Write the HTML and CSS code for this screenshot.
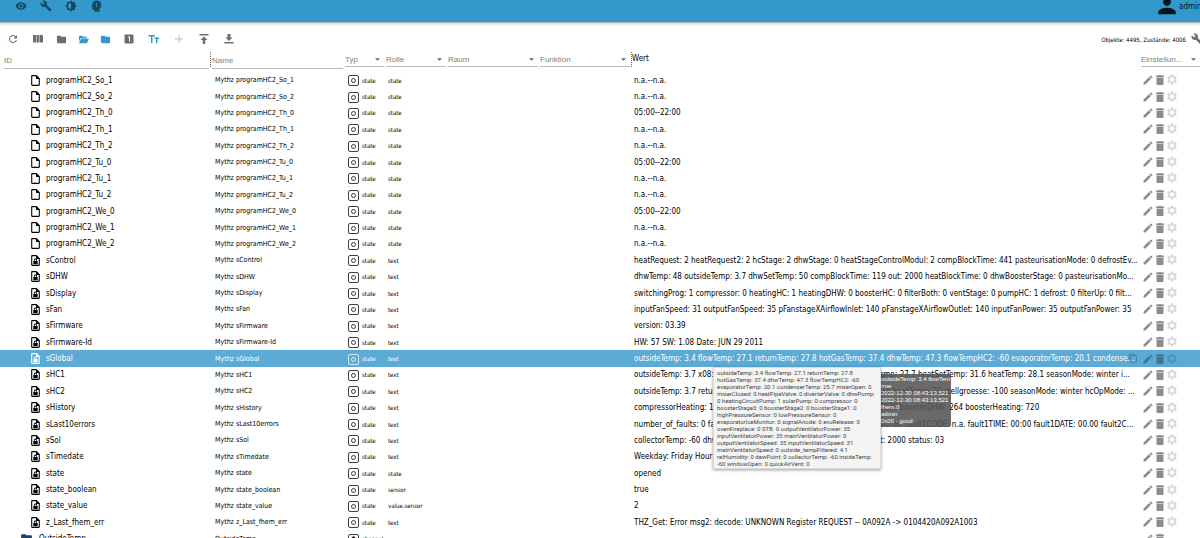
FILE: index.html
```
<!DOCTYPE html>
<html lang="de">
<head>
    <meta charset="UTF-8">
    <meta name="viewport" content="width=device-width, initial-scale=1.0">
    <title>Objekte</title>
    <link rel="stylesheet" href="styles.css">
</head>
<body>
    <svg class="sprite" aria-hidden="true">
        <symbol id="i-eye" viewBox="0 0 24 24"><path d="M12 4.500C7 4.500 2.730 7.610 1 12c1.730 4.390 6 7.500 11 7.500s9.270-3.110 11-7.500c-1.730-4.390-6-7.500-11-7.500zM12 17c-2.760 0-5-2.240-5-5s2.240-5 5-5 5 2.240 5 5-2.240 5-5 5zm0-8c-1.660 0-3 1.340-3 3s1.340 3 3 3 3-1.340 3-3-1.340-3-3-3z"/></symbol>
        <symbol id="i-wrench" viewBox="0 0 24 24"><path d="M22.700 19l-9.100-9.100c.9-2.300.4-5-1.500-6.900-2-2-5-2.400-7.400-1.300L9 6 6 9 1.600 4.700C.4 7.100.9 10.100 2.900 12.100c1.900 1.900 4.600 2.400 6.900 1.500l9.100 9.100c.4.4 1 .4 1.400 0l2.300-2.300c.5-.4.5-1.100.1-1.400z"/></symbol>
        <symbol id="i-theme" viewBox="0 0 24 24"><path d="M20 8.690V4h-4.690L12 .69 8.690 4H4v4.690L.69 12 4 15.310V20h4.690L12 23.310 15.310 20H20v-4.690L23.310 12 20 8.690zM12 18c-3.310 0-6-2.690-6-6s2.690-6 6-6v12z"/></symbol>
        <symbol id="i-head" viewBox="0 0 24 24"><path fill-rule="evenodd" d="M13 1C8.500 1 5 4 4.900 8.500L2.600 12.600c-.2.4 0 .9.500.9H5V18c0 1.100.9 2 2 2h2v3.500h10v-6c2-1.500 3.500-4 3.500-7C22.500 5 18.500 1 13 1zm1 13h-2v-2h2zm0-3.500h-2V6h2z"/></symbol>
        <symbol id="i-user" viewBox="0 0 24 24"><path d="M12 12c2.600 0 4.700-2.100 4.700-4.700S14.600 2.600 12 2.600 7.300 4.700 7.300 7.300 9.400 12 12 12zm0 2c-3.500 0-10.500 1.800-10.500 5.200V22h21v-2.800C22.500 15.800 15.500 14 12 14z"/></symbol>
        <symbol id="i-refresh" viewBox="0 0 24 24"><path d="M17.650 6.350C16.200 4.900 14.210 4 12 4c-4.420 0-7.990 3.580-7.990 8s3.570 8 7.990 8c3.730 0 6.840-2.550 7.730-6h-2.080c-.82 2.330-3.040 4-5.650 4-3.310 0-6-2.690-6-6s2.690-6 6-6c1.660 0 3.140.69 4.220 1.780L13 11h7V4l-2.350 2.350z"/></symbol>
        <symbol id="i-columns" viewBox="0 0 24 24"><path d="M9 19h6V4H9v15zm-7 0h6V4H2v15zM16 4v15h6V4h-6z"/></symbol>
        <symbol id="i-folder" viewBox="0 0 24 24"><path d="M10 4H4c-1.100 0-2 .9-2 2v12c0 1.100.9 2 2 2h16c1.100 0 2-.9 2-2V8c0-1.100-.9-2-2-2h-8l-2-2z"/></symbol>
        <symbol id="i-folder-open" viewBox="0 0 24 24"><path d="M2 17V6c0-1.100.8-2 2-2h5l2 2h6.500c1 0 1.800.8 1.800 1.800V9H7c-1 0-1.800.6-2.200 1.500L2 17zm.6 2l3.500-7.600c.2-.6.8-.9 1.400-.9h14.800c.9 0 1.400.9 1 1.700l-3 6.600c-.3.700-1 1.200-1.800 1.200H3.500c-.7 0-1.100-.4-.9-1z"/></symbol>
        <symbol id="i-one" viewBox="0 0 24 24"><path d="M19 3H5c-1.100 0-2 .9-2 2v14c0 1.100.9 2 2 2h14c1.100 0 2-.9 2-2V5c0-1.100-.9-2-2-2zm-5 14h-2V9h-2V7h4v10z"/></symbol>
        <symbol id="i-text" viewBox="0 0 24 24"><path d="M1 4v3h5v13h3V7h5V4H1zm21 5h-9v3h3v8h3v-8h3V9z"/></symbol>
        <symbol id="i-plus" viewBox="0 0 24 24"><path d="M20 13h-7v7h-2v-7H4v-2h7V4h2v7h7v2z"/></symbol>
        <symbol id="i-upload" viewBox="0 0 24 24"><path d="M3 2v3h18V2H3zm2 12h4.500v8h5v-8H19l-7-7-7 7z"/></symbol>
        <symbol id="i-download" viewBox="0 0 24 24"><path d="M19 9h-4V2H9v7H5l7 7 7-7zM3 18v3h18v-3H3z"/></symbol>
        <symbol id="i-file" viewBox="0 0 24 24"><path d="M14 2H6c-1.100 0-2 .9-2 2v16c0 1.100.9 2 2 2h12c1.100 0 2-.9 2-2V8l-6-6zM6 20V4h7v5h5v11H6z"/></symbol>
        <symbol id="i-filelock" viewBox="0 0 24 24"><path d="M14 2H6c-1.100 0-2 .9-2 2v16c0 1.100.9 2 2 2h12c1.100 0 2-.9 2-2V8l-6-6zM6 20V4h7v5h5v11H6z"/><path fill-rule="evenodd" d="M8 13h1v-1.500c0-1.700 1.300-3 3-3s3 1.300 3 3V13h1v6H8zm2.500 0h3v-1.500c0-.8-.7-1.500-1.500-1.500s-1.500.7-1.500 1.500z"/></symbol>
        <symbol id="i-edit" viewBox="0 0 24 24"><path d="M3 17.250V21h3.750L17.810 9.940l-3.750-3.750L3 17.250zM20.710 7.040c.39-.39.39-1.020 0-1.410l-2.340-2.340c-.39-.39-1.020-.39-1.410 0l-1.830 1.830 3.750 3.750 1.830-1.830z"/></symbol>
        <symbol id="i-trash" viewBox="0 0 24 24"><path d="M5 20c0 1.100.9 2 2 2h10c1.100 0 2-.9 2-2V7H5v13zM20 3h-4.500l-1-1h-5l-1 1H4v3h16V3z"/></symbol>
        <symbol id="i-gear" viewBox="0 0 24 24"><path fill-rule="evenodd" d="M10 1h4l.6 3.200 2 1.200 3.100-1.200 2 3.500-2.500 2.100v2.400l2.500 2.100-2 3.500-3.100-1.200-2 1.200L14 21h-4l-.6-3.200-2-1.200-3.100 1.200-2-3.500 2.500-2.100V9.800L2.300 7.700l2-3.500 3.100 1.200 2-1.200L10 1zm2 5.500a4.500 4.500 0 100 9 4.500 4.500 0 000-9z"/></symbol>
        <symbol id="i-copy" viewBox="0 0 24 24"><path d="M16 1H4c-1.100 0-2 .9-2 2v14h2V3h12V1zm3 4H8c-1.100 0-2 .9-2 2v14c0 1.100.9 2 2 2h11c1.100 0 2-.9 2-2V7c0-1.100-.9-2-2-2zm0 16H8V7h11v14z"/></symbol>
        <symbol id="i-state" viewBox="0 0 22 22"><rect class="box" x="1" y="1" width="20" height="20" rx="3"/><circle class="dot" cx="11" cy="11" r="4"/></symbol>
        <symbol id="i-channel" viewBox="0 0 22 22"><rect class="box" x="1" y="1" width="20" height="20" rx="3"/><path d="M11 4l4 4h-3v9h-2V8H7z"/></symbol>
    </svg>

    <header class="appbar">
        <button aria-label="Ansicht"><svg><use href="#i-eye"/></svg></button>
        <button aria-label="Einstellungen"><svg><use href="#i-wrench"/></svg></button>
        <button aria-label="Thema"><svg><use href="#i-theme"/></svg></button>
        <button aria-label="Expertenmodus"><svg><use href="#i-head"/></svg></button>
        <div class="user"><svg><use href="#i-user"/></svg><span>admin</span></div>
    </header>

    <div class="toolbar">
        <button aria-label="Aktualisieren"><svg><use href="#i-refresh"/></svg></button>
        <button aria-label="Spalten"><svg><use href="#i-columns"/></svg></button>
        <button class="narrow" aria-label="Alle schließen"><svg><use href="#i-folder"/></svg></button>
        <button class="narrow active" aria-label="Alle öffnen"><svg><use href="#i-folder-open"/></svg></button>
        <button class="narrow active" aria-label="Eine Ebene schließen"><svg><use href="#i-folder"/></svg></button>
        <button aria-label="Eine Ebene öffnen"><svg><use href="#i-one"/></svg></button>
        <button class="active" aria-label="Namen anzeigen"><svg><use href="#i-text"/></svg></button>
        <button class="disabled" aria-label="Hinzufügen"><svg><use href="#i-plus"/></svg></button>
        <button aria-label="Hochladen"><svg><use href="#i-upload"/></svg></button>
        <button aria-label="Herunterladen"><svg><use href="#i-download"/></svg></button>
        <span class="counter">Objekte: 4495, Zustände: 4006</span>
        <button class="config" aria-label="Konfiguration"><svg><use href="#i-wrench"/></svg></button>
    </div>

    <main class="objects">
        <table>
            <colgroup>
                <col class="col-id">
                <col class="col-name">
                <col class="col-type">
                <col class="col-role">
                <col class="col-room">
                <col class="col-func">
                <col>
                <col class="col-actions">
            </colgroup>
            <thead>
                <tr>
                    <th class="first"><input type="text" placeholder="ID" aria-label="ID"></th>
                    <th><div class="handle"><input type="text" placeholder="Name" aria-label="Name"></div></th>
                    <th><select aria-label="Typ"><option>Typ</option></select></th>
                    <th><select aria-label="Rolle"><option>Rolle</option></select></th>
                    <th><select aria-label="Raum"><option>Raum</option></select></th>
                    <th><select aria-label="Funktion"><option>Funktion</option></select></th>
                    <th><div class="handle wert">Wert</div></th>
                    <th class="last"><select aria-label="Einstellungen"><option>Einstellun...</option></select></th>
                </tr>
            </thead>
            <tbody id="rows"></tbody>
        </table>
    </main>

    <script>
        const rows = [
            ['programHC2_So_1', 'state', 'n.a.--n.a.'],
            ['programHC2_So_2', 'state', 'n.a.--n.a.'],
            ['programHC2_Th_0', 'state', '05:00--22:00'],
            ['programHC2_Th_1', 'state', 'n.a.--n.a.'],
            ['programHC2_Th_2', 'state', 'n.a.--n.a.'],
            ['programHC2_Tu_0', 'state', '05:00--22:00'],
            ['programHC2_Tu_1', 'state', 'n.a.--n.a.'],
            ['programHC2_Tu_2', 'state', 'n.a.--n.a.'],
            ['programHC2_We_0', 'state', '05:00--22:00'],
            ['programHC2_We_1', 'state', 'n.a.--n.a.'],
            ['programHC2_We_2', 'state', 'n.a.--n.a.'],
            ['sControl', 'text', 'heatRequest: 2 heatRequest2: 2 hcStage: 2 dhwStage: 0 heatStageControlModul: 2 compBlockTime: 441 pasteurisationMode: 0 defrostEv...'],
            ['sDHW', 'text', 'dhwTemp: 48 outsideTemp: 3.7 dhwSetTemp: 50 compBlockTime: 119 out: 2000 heatBlockTime: 0 dhwBoosterStage: 0 pasteurisationMo...'],
            ['sDisplay', 'text', 'switchingProg: 1 compressor: 0 heatingHC: 1 heatingDHW: 0 boosterHC: 0 filterBoth: 0 ventStage: 0 pumpHC: 1 defrost: 0 filterUp: 0 filt...'],
            ['sFan', 'text', 'inputFanSpeed: 31 outputFanSpeed: 35 pFanstageXAirflowInlet: 140 pFanstageXAirflowOutlet: 140 inputFanPower: 35 outputFanPower: 35'],
            ['sFirmware', 'text', 'version: 03.39'],
            ['sFirmware-Id', 'text', 'HW: 57 SW: 1.08 Date: JUN 29 2011'],
            ['sGlobal', 'text', 'outsideTemp: 3.4 flowTemp: 27.1 returnTemp: 27.8 hotGasTemp: 37.4 dhwTemp: 47.3 flowTempHC2: -60 evaporatorTemp: 20.1 condense...'],
            ['sHC1', 'text', 'outsideTemp: 3.7 x08: 0 returnTemp: 27.8 integralHeatHC: -12 flowTemp: 27.7 heatSetTemp: 31.6 heatTemp: 28.1 seasonMode: winter i...'],
            ['sHC2', 'text', 'outsideTemp: 3.7 returnTemp: 27.8 vorlaufTemp: 27.7 heatSetTemp: 20 heatTemp: 20 stellgroesse: -100 seasonMode: winter hcOpMode: ...'],
            ['sHistory', 'text', 'compressorHeating: 15302 compressorCooling: 0 compressorDHW: 2620 boosterDHW: 264 boosterHeating: 720'],
            ['sLast10errors', 'text', 'number_of_faults: 0 fault0CODE: n.a. fault0TIME: 00:00 fault0DATE: 00.00. fault1CODE: n.a. fault1TIME: 00:00 fault1DATE: 00.00 fault2C...'],
            ['sSol', 'text', 'collectorTemp: -60 dhwTemp: 48.1 flowTemp: -60 ed_sol_pump: 0 out: 2000 status: 03'],
            ['sTimedate', 'text', 'Weekday: Friday Hour: 8 Min: 43 Sec: 10'],
            ['state', 'state', 'opened'],
            ['state_boolean', 'sensor', 'true'],
            ['state_value', 'value.sensor', '2'],
            ['z_Last_fhem_err', 'text', 'THZ_Get: Error msg2: decode: UNKNOWN Register REQUEST -- 0A092A -> 0104420A092A1003']
        ];

        const tooltips = `
            <button class="copy" aria-label="Kopieren"><svg><use href="#i-copy"/></svg></button>
            <div class="tip-state">outsideTemp: 3.4 flowTem<br>true<br>2022-12-30 08:43:13.521<br>2022-12-30 08:43:13.521<br>fhem.0<br>admin<br>0x00 - good</div>
            <div class="tip-title">outsideTemp: 3.4 flowTemp: 27.1 returnTemp: 27.8<br>
                hotGasTemp: 37.4 dhwTemp: 47.3 flowTempHC2: -60<br>
                evaporatorTemp: 20.1 condenserTemp: 25.7 mixerOpen: 0<br>
                mixerClosed: 0 heatPipeValve: 0 diverterValve: 0 dhwPump:<br>
                0 heatingCircuitPump: 1 solarPump: 0 compressor: 0<br>
                boosterStage3: 0 boosterStage2: 0 boosterStage1: 0<br>
                highPressureSensor: 0 lowPressureSensor: 0<br>
                evaporatorIceMonitor: 0 signalAnode: 0 evuRelease: 0<br>
                ovenFireplace: 0 STB: 0 outputVentilatorPower: 35<br>
                inputVentilatorPower: 35 mainVentilatorPower: 0<br>
                outputVentilatorSpeed: 35 inputVentilatorSpeed: 31<br>
                mainVentilatorSpeed: 0 outside_tempFiltered: 4.1<br>
                relHumidity: 0 dewPoint: 0 collectorTemp: -60 insideTemp:<br>
                -60 windowOpen: 0 quickAirVent: 0</div>`;

        const icon = name => `<svg><use href="#i-${name}"/></svg>`;

        const actions = `<td><div class="actions">
            <button aria-label="Bearbeiten">${icon('edit')}</button>
            <button aria-label="Löschen">${icon('trash')}</button>
            <button class="gear" aria-label="Einstellungen">${icon('gear')}</button></div></td>`;

        let html = '';
        rows.forEach(([id, role, value]) => {
            const selected = id === 'sGlobal';
            const file = id.startsWith('program') ? 'file' : 'filelock';
            html += `<tr${selected ? ' class="selected"' : ''}>
                <td><div class="id">${icon(file)}${id}</div></td>
                <td class="name">Mythz ${id}</td>
                <td><div class="type">${icon('state')}state</div></td>
                <td class="role">${role}</td>
                <td></td>
                <td></td>
                <td class="value"><div class="text">${value.replace('>', '&gt;')}</div>${selected ? tooltips : ''}</td>
                ${actions}
            </tr>`;
        });

        html += `<tr>
            <td><div class="id channel">${icon('folder')}OutsideTemp</div></td>
            <td class="name">OutsideTemp</td>
            <td><div class="type">${icon('channel')}channel</div></td>
            <td></td><td></td><td></td><td></td>
            ${actions.replace(/<button class="gear".*?<\/button>/, '')}
        </tr>`;

        document.getElementById('rows').innerHTML = html;
    </script>
</body>
</html>
```
FILE: styles.css
```
* {
    box-sizing: border-box;
}

body {
    margin: 0;
    height: 100vh;
    overflow: hidden;
    background-color: #fff;
    color: #000;
    font-family: "DejaVu Sans Condensed", "DejaVu Sans", sans-serif;
    font-size: 8px;
}

button {
    display: flex;
    align-items: center;
    justify-content: center;
    padding: 0;
    border: 0;
    background: none;
    color: inherit;
    cursor: pointer;
}

svg {
    display: block;
    flex: none;
    width: 12px;
    height: 12px;
    fill: currentColor;
}

.sprite {
    display: none;
}

.appbar {
    display: flex;
    align-items: flex-start;
    height: 22px;
    padding-left: 8px;
    overflow: hidden;
    background-color: #3399cc;
    color: #17485f;
}

.appbar button {
    width: 25px;
    height: 12px;
}

.user {
    display: flex;
    align-items: center;
    gap: 2px;
    width: 43px;
    height: 12px;
    margin-left: auto;
    color: #06141c;
    white-space: nowrap;
}

.user svg {
    width: 20px;
    height: 20px;
}

.toolbar {
    display: flex;
    align-items: center;
    height: 27px;
    padding-top: 6px;
    border-top: 1px solid #b5b9bb;
    box-shadow: inset 0 3px 3px -2px #ccc;
    color: #6e6e6e;
}

.toolbar button {
    width: 25px;
    height: 20px;
}

.toolbar .narrow {
    width: 22px;
}

.toolbar .narrow svg {
    width: 11px;
    height: 11px;
}

.toolbar .active {
    color: #3399cc;
}

.toolbar .disabled {
    color: #bbb;
}

.counter {
    margin-left: auto;
    color: #000;
    font-size: 6px;
}

.toolbar .config {
    width: 14px;
    overflow: hidden;
    justify-content: flex-start;
    padding-left: 5px;
}

.objects {
    overflow: hidden;
}

table {
    width: 100%;
    height: calc(100vh - 40px);
    table-layout: fixed;
    border-collapse: collapse;
}

.col-id {
    width: 210px;
}

.col-name {
    width: 134px;
}

.col-type {
    width: 41px;
}

.col-role {
    width: 62px;
}

.col-room,
.col-func {
    width: 92px;
}

.col-actions {
    width: 60px;
}

td,
th {
    padding: 0;
    font-weight: normal;
    text-align: left;
    white-space: nowrap;
}

thead tr {
    height: 23px;
}

th {
    padding: 0 1px;
    vertical-align: top;
}

th.first {
    padding-left: 4px;
}

th.last {
    padding-right: 0;
}

th:nth-child(2),
th:nth-child(7) {
    padding: 3px 0 0;
}

th input,
th select {
    display: block;
    width: 100%;
    height: 18px;
    padding: 3px 0 0;
    border: 0;
    border-bottom: 1px solid #bbb;
    border-radius: 0;
    outline: 0;
    background: none;
    color: #808080;
    font-family: "Liberation Sans", Arial, sans-serif;
    font-size: 8px;
}

th input {
    height: 20px;
}

th input::placeholder {
    color: #808080;
}

th select {
    appearance: none;
    background: url("data:image/svg+xml,%3Csvg xmlns='http://www.w3.org/2000/svg' viewBox='0 0 6 3'%3E%3Cpath fill='%23666' d='M0 0h6L3 3z'/%3E%3C/svg%3E") no-repeat right 4px top 9px / 5px 3px;
}

.handle {
    height: 15px;
    border-left: 1px dotted #666;
}

.handle input {
    width: 131px;
    height: 17px;
    margin-left: 1px;
    padding-top: 0;
}

.wert {
    padding-top: 2px;
}

.id {
    display: flex;
    align-items: center;
    gap: 4px;
    padding-left: 29px;
}

.id svg {
    width: 13px;
    height: 13px;
}

.channel {
    padding-left: 20px;
    gap: 6px;
}

.channel svg {
    color: #164477;
}

.name {
    padding-left: 5px;
    font-size: 7px;
}

.type {
    display: flex;
    align-items: center;
    gap: 3px;
    padding-left: 4px;
    font-size: 6px;
}

.type svg {
    width: 11px;
    height: 11px;
    margin-top: 1px;
}

.box,
.dot {
    fill: none;
    stroke: currentColor;
    stroke-width: 1.5;
}

.role {
    padding-left: 3px;
    font-size: 6px;
}

.value {
    position: relative;
    padding-left: 3px;
}

.text {
    overflow: hidden;
    text-overflow: ellipsis;
}

.actions {
    display: flex;
    padding-left: 2px;
    color: #8c8c8c;
}

.actions button {
    width: 12px;
    height: 12px;
}

.actions .gear {
    color: #d6d6d6;
}

.selected {
    background-color: #5babd6;
    color: #fff;
}

.selected .dot {
    fill: currentColor;
}

.selected .actions {
    color: #3f7694;
}

.selected .gear {
    color: #4c93b8;
}

.copy {
    position: absolute;
    top: 3px;
    right: 2px;
    color: #3f7694;
}

.copy svg {
    width: 10px;
    height: 10px;
}

.tip-state,
.tip-title {
    position: absolute;
    top: 100%;
    line-height: 7px;
    font-size: 6px;
}

.tip-state {
    left: 250px;
    z-index: 1;
    width: 70px;
    margin-top: 7px;
    padding: 2px 0;
    overflow: hidden;
    border-radius: 0 2px 2px 0;
    background-color: rgba(85, 85, 85, 0.88);
    color: #fff;
    font-family: "Liberation Sans", Arial, sans-serif;
}

.tip-title {
    left: 82px;
    z-index: 2;
    width: 168px;
    padding: 1px 3px;
    border: 1px solid #ddd;
    background-color: #f4f4f4;
    box-shadow: 0 1px 3px rgba(0, 0, 0, 0.4);
    color: #444;
    font-family: Roboto, "Liberation Sans", sans-serif;
}
```
